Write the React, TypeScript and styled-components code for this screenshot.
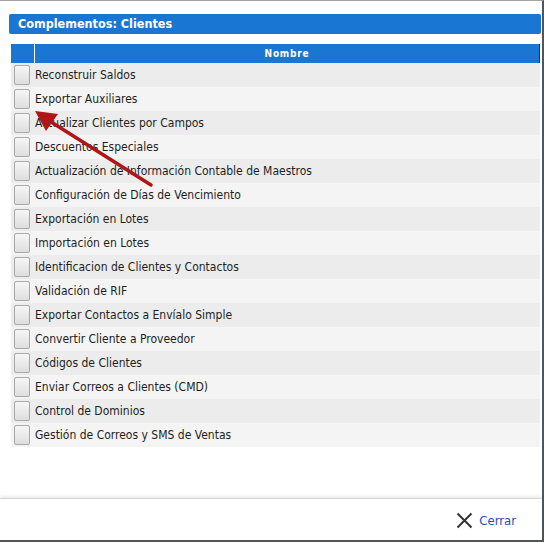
import React from "react";
import styled, { createGlobalStyle } from "styled-components";

const Global = createGlobalStyle`
  html, body { margin: 0; padding: 0; background: #fff; }
  body { font-family: "DejaVu Sans Condensed", "DejaVu Sans", Verdana, sans-serif; }
`;

const Dialog = styled.div`
  position: relative;
  box-sizing: border-box;
  width: 544px;
  height: 542px;
  border-top: 1px solid #a3a3a3;
  border-right: 2px solid #50565c;
  border-bottom: 2px solid #50565c;
  display: flex;
  flex-direction: column;
  background: #fff;
`;

const Content = styled.div`
  flex: 1;
  padding: 13px 0 0 9px;
`;

const Title = styled.div`
  box-sizing: border-box;
  width: 532px;
  height: 20px;
  background: #1976d2;
  border-radius: 2px;
  color: #fff;
  font-weight: bold;
  font-size: 12.5px;
  line-height: 20px;
  padding-left: 9px;
`;

const Table = styled.div`
  margin: 10px 0 0 2px;
  width: 529px;
`;

const HeadRow = styled.div`
  display: grid;
  grid-template-columns: 23px 1fr;
  column-gap: 1px;
  height: 19px;
  background: #fff;
  border-right: 1px solid #333;
`;

const HeadCell = styled.div`
  background: #1976d2;
  color: #fff;
  font-weight: bold;
  font-size: 10px;
  letter-spacing: 0.8px;
  line-height: 19px;
  text-align: center;
`;

const Row = styled.div<{ $alt: boolean }>`
  display: grid;
  grid-template-columns: 24px 1fr;
  align-items: center;
  height: 24px;
  background: ${(p) => (p.$alt ? "#f4f4f4" : "#ececec")};
`;

const Check = styled.div`
  box-sizing: border-box;
  margin-left: 3px;
  width: 16px;
  height: 20px;
  border: 1px solid #a8a8a8;
  border-radius: 2px;
  background: linear-gradient(#f6f6f6, #dedede);
`;

const Label = styled.div`
  color: #1e1e1e;
  font-size: 12px;
  white-space: nowrap;
`;

const Footer = styled.div`
  height: 41px;
  border-top: 1px solid #d6d6d6;
  box-shadow: 0 -2px 3px rgba(0, 0, 0, 0.08);
  display: flex;
  justify-content: flex-end;
  align-items: center;
  padding-right: 26px;
`;

const CloseButton = styled.div`
  display: flex;
  align-items: center;
  gap: 6px;
  color: #1f4fc4;
  font-size: 13px;
  padding-top: 2px;
`;

const Arrow = styled.svg`
  position: absolute;
  left: 0;
  top: 0;
  pointer-events: none;
`;

const items = [
  "Reconstruir Saldos",
  "Exportar Auxiliares",
  "Actualizar Clientes por Campos",
  "Descuentos Especiales",
  "Actualización de Información Contable de Maestros",
  "Configuración de Días de Vencimiento",
  "Exportación en Lotes",
  "Importación en Lotes",
  "Identificacion de Clientes y Contactos",
  "Validación de RIF",
  "Exportar Contactos a Envíalo Simple",
  "Convertir Cliente a Proveedor",
  "Códigos de Clientes",
  "Enviar Correos a Clientes (CMD)",
  "Control de Dominios",
  "Gestión de Correos y SMS de Ventas",
];

export default function App() {
  return (
    <>
      <Global />
      <Dialog>
        <Content>
          <Title>Complementos: Clientes</Title>
          <Table>
            <HeadRow>
              <HeadCell />
              <HeadCell>Nombre</HeadCell>
            </HeadRow>
            {items.map((t, i) => (
              <Row key={t} $alt={i % 2 === 1}>
                <Check />
                <Label>{t}</Label>
              </Row>
            ))}
          </Table>
        </Content>
        <Footer>
          <CloseButton>
            <svg width="17" height="17" viewBox="0 0 17 17">
              <path d="M1.5 1.5 L15.5 15.5 M15.5 1.5 L1.5 15.5" stroke="#333" strokeWidth="2" fill="none" />
            </svg>
            Cerrar
          </CloseButton>
        </Footer>
        <Arrow width="544" height="542" viewBox="0 0 544 542">
          <line x1="151" y1="184" x2="48" y2="119" stroke="#b01616" strokeWidth="3.5" strokeLinecap="round" />
          <polygon points="35,110 58,113 46,130" fill="#b01616" />
        </Arrow>
      </Dialog>
    </>
  );
}
